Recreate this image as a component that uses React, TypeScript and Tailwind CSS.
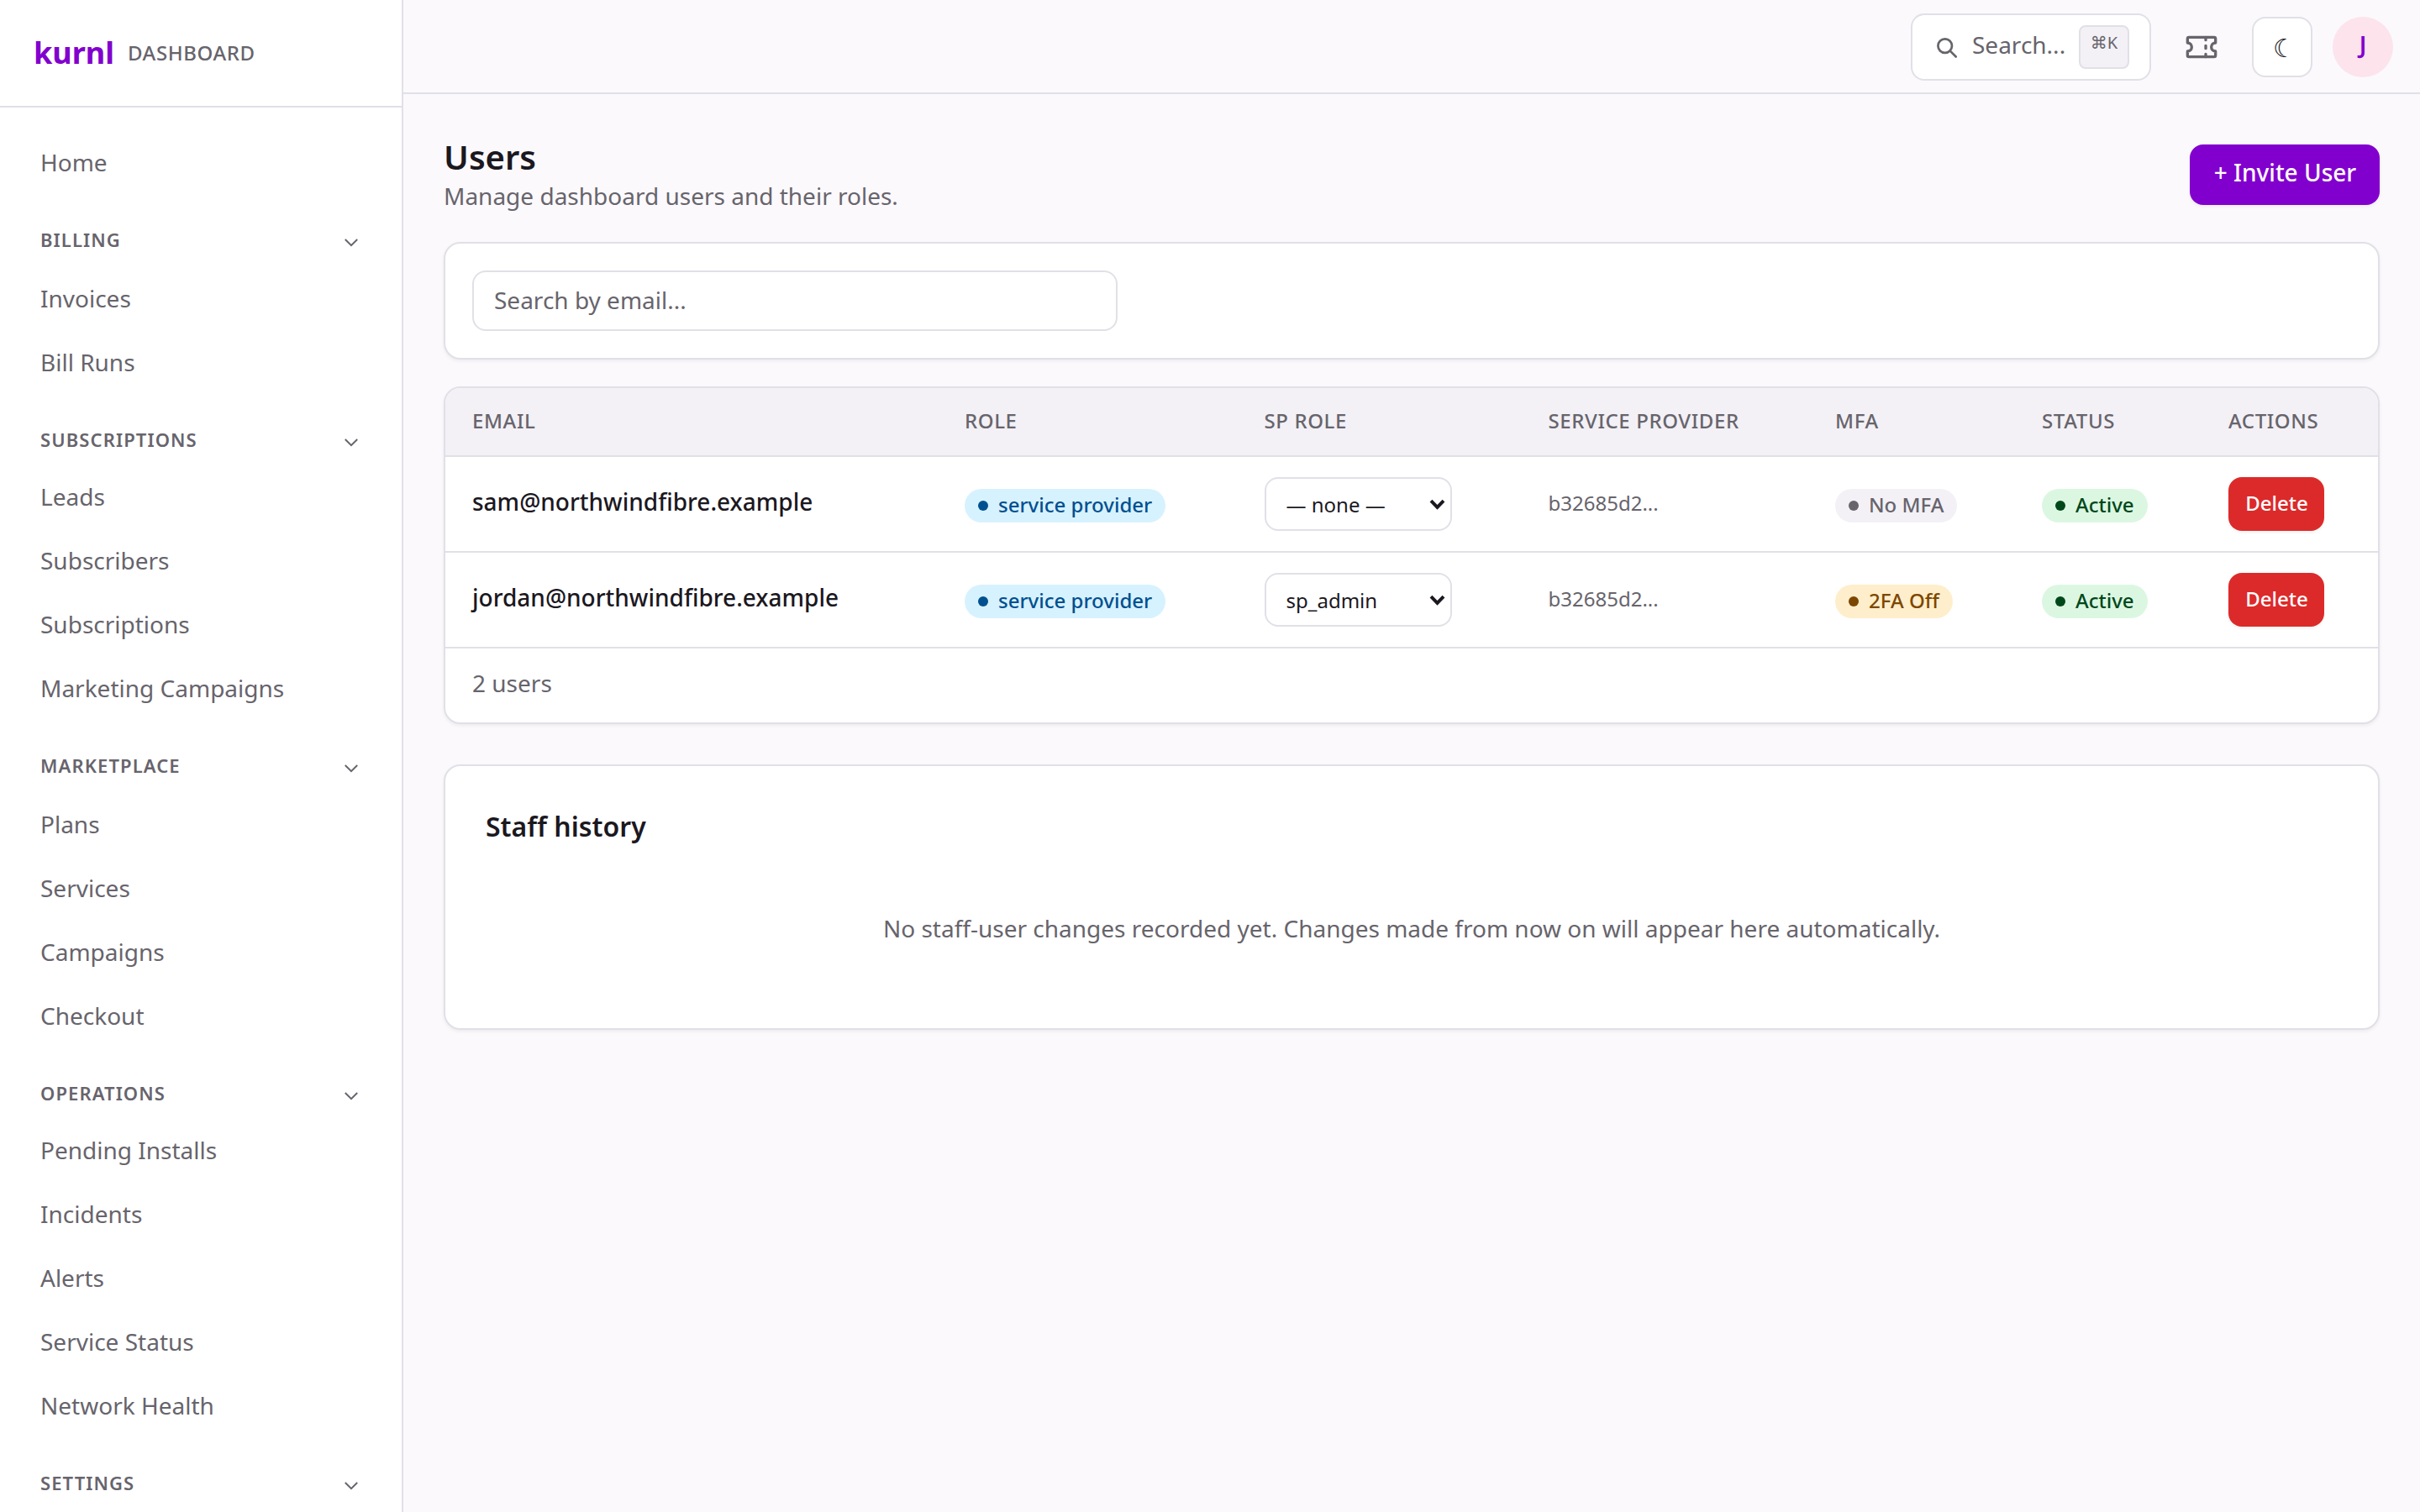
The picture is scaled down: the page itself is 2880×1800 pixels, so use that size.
import { useState } from "react";

interface NavSection {
  title: string;
  items: string[];
}

interface User {
  id: number;
  email: string;
  role: string;
  spRole: string;
  provider: string;
  mfa: boolean;
}

const sections: NavSection[] = [
  { title: "Billing", items: ["Invoices", "Bill Runs"] },
  {
    title: "Subscriptions",
    items: ["Leads", "Subscribers", "Subscriptions", "Marketing Campaigns"],
  },
  {
    title: "Marketplace",
    items: ["Plans", "Services", "Campaigns", "Checkout"],
  },
  {
    title: "Operations",
    items: [
      "Pending Installs",
      "Incidents",
      "Alerts",
      "Service Status",
      "Network Health",
    ],
  },
  { title: "Settings", items: [] },
];

const users: User[] = [
  {
    id: 1,
    email: "sam@northwindfibre.example",
    role: "service provider",
    spRole: "",
    provider: "b32685d2...",
    mfa: false,
  },
  {
    id: 2,
    email: "jordan@northwindfibre.example",
    role: "service provider",
    spRole: "sp_admin",
    provider: "b32685d2...",
    mfa: true,
  },
];

const badgeTones = {
  info: "bg-[#d7f2ff] text-[#00508f]",
  neutral: "bg-[#f3f1f6] text-[#67646c]",
  warning: "bg-[#ffeecb] text-[#7c4700]",
  success: "bg-[#dcf7e1] text-[#00481b]",
};

const Badge = ({
  tone,
  label,
}: {
  tone: keyof typeof badgeTones;
  label: string;
}) => (
  <span
    className={`mt-1 inline-flex h-10 items-center gap-3 rounded-[20px] px-4 align-top text-[24px] leading-[38px] font-medium whitespace-nowrap ${badgeTones[tone]}`}
  >
    <span className="h-3 w-3 rounded-full bg-current" />
    <span className="-mt-[3px]">{label}</span>
  </span>
);

const SpRoleSelect = ({ initial }: { initial: string }) => {
  const [value, setValue] = useState(initial);

  return (
    <div className="relative h-16 w-[223px]">
      <select
        value={value}
        onChange={(e) => setValue(e.target.value)}
        className="h-16 w-full appearance-none rounded-[16px] border-2 border-[#e1e0e7] bg-white pt-px pl-6 text-[24px] text-[#1b181f]"
      >
        <option value="">— none —</option>
        <option value="sp_admin">sp_admin</option>
      </select>
      <svg
        className="pointer-events-none absolute top-[26px] right-[8px] h-[13px] w-[19px]"
        viewBox="0 0 19 13"
        fill="none"
        stroke="#1b181f"
        strokeWidth="4"
      >
        <path d="M2 2.2 9.5 9.8 17 2.2" />
      </svg>
    </div>
  );
};

const Sidebar = () => (
  <aside className="flex h-full w-[480px] shrink-0 flex-col border-r-2 border-[#e1e0e7] bg-white">
    <div className="flex h-32 shrink-0 items-center gap-4 border-b-2 border-[#e1e0e7] pl-10">
      <span className="text-[36px] leading-[50px] font-bold text-[#8200ce]">
        kurnl
      </span>
      <span className="text-[24px] font-medium tracking-[0.025em] text-[#67646c] uppercase">
        Dashboard
      </span>
    </div>
    <nav className="pt-[27px] pr-[52px] pl-12 text-[#67646c]">
      <a className="flex h-[76px] items-center text-[28px]">Home</a>
      <div>
        {sections.map((section) => (
          <div key={section.title} className="group pt-9">
            <button className="flex h-[37px] w-full items-center justify-between text-[22px] font-semibold tracking-[0.05em] uppercase group-odd:mb-[13px] group-even:mb-[11px]">
              {section.title}
              <svg
                className="mt-[6px] h-[10px] w-4"
                viewBox="0 0 16 10"
                fill="none"
                stroke="currentColor"
                strokeWidth="2"
              >
                <path d="M.8 1 8 8.2 15.2 1" />
              </svg>
            </button>
            {section.items.map((item) => (
              <a key={item} className="flex h-[76px] items-center text-[28px]">
                {item}
              </a>
            ))}
          </div>
        ))}
      </div>
    </nav>
  </aside>
);

const Topbar = () => (
  <header className="flex h-28 shrink-0 items-center justify-end gap-6 border-b-2 border-[#e1e0e7] pt-[2px] pr-8">
    <button className="flex h-20 w-[286px] items-center rounded-[16px] border-2 border-[#e1e0e7] bg-white px-6 text-[#67646c]">
      <svg
        className="mt-[2px] mr-[15px] h-8 w-8"
        viewBox="0 0 32 32"
        fill="none"
        stroke="currentColor"
        strokeWidth="2.7"
        strokeLinecap="round"
      >
        <circle cx="14.7" cy="13.6" r="8.3" />
        <path d="m20.8 19.6 6.9 6.9" />
      </svg>
      <span className="-mt-[6px] flex-1 text-left text-[28px]">Search...</span>
      <kbd className="h-[52px] w-[60px] rounded-lg border-2 border-[#e1e0e7] bg-[#f3f1f6] text-center font-['Noto_Sans','DejaVu_Sans',sans-serif] text-[20px] leading-[38px]">
        ⌘K
      </kbd>
    </button>
    <button className="flex h-[72px] w-[72px] items-center justify-center text-[#67646c]">
      <svg
        className="h-10 w-10"
        viewBox="0 0 24 24"
        fill="none"
        stroke="currentColor"
        strokeWidth="2"
        strokeLinecap="round"
        strokeLinejoin="round"
      >
        <path d="M2 9a3 3 0 0 1 0 6v3a1 1 0 0 0 1 1h18a1 1 0 0 0 1-1v-3a3 3 0 0 1 0-6V6a1 1 0 0 0-1-1H3a1 1 0 0 0-1 1Z" />
        <path d="M15 5v2M15 11v2M15 17v2" />
      </svg>
    </button>
    <button className="flex h-[72px] w-[72px] items-center justify-center rounded-[16px] border-2 border-[#e1e0e7] bg-white pl-[5px] text-[30px] text-[#1b181f]">
      ☾
    </button>
    <div className="flex h-[72px] w-[72px] items-center justify-center rounded-full bg-[#fce3ec] pb-[6px] text-[28px] font-semibold text-[#8200ce]">
      J
    </div>
  </header>
);

const UsersTable = () => (
  <div className="mt-8 overflow-hidden rounded-[20px] border-2 border-[#e1e0e7] bg-white shadow-[0_2px_4px_rgba(27,24,31,0.06)]">
    <table className="w-full table-fixed border-separate border-spacing-0 text-left">
      <colgroup>
        <col className="w-[586px]" />
        <col className="w-[356.5px]" />
        <col className="w-[338px]" />
        <col className="w-[341.5px]" />
        <col className="w-[246px]" />
        <col className="w-[222px]" />
        <col />
      </colgroup>
      <thead>
        <tr className="bg-[#f3f1f6] text-[24px] tracking-[0.025em] text-[#67646c] uppercase">
          {[
            "Email",
            "Role",
            "SP Role",
            "Service Provider",
            "MFA",
            "Status",
            "Actions",
          ].map((label) => (
            <th
              key={label}
              className="h-[82px] border-b-2 border-[#e1e0e7] px-8 pb-[3px] font-medium whitespace-nowrap"
            >
              {label}
            </th>
          ))}
        </tr>
      </thead>
      <tbody>
        {users.map((user) => (
          <tr
            key={user.id}
            className="[&>td]:h-[114px] [&>td]:border-b-2 [&>td]:border-[#e1e0e7]"
          >
            <td className="px-8 pb-[6px] text-[28px] font-medium text-[#1b181f]">
              {user.email}
            </td>
            <td className="px-8">
              <Badge tone="info" label={user.role} />
            </td>
            <td className="px-8">
              <SpRoleSelect initial={user.spRole} />
            </td>
            <td className="px-8 pb-[3px] text-[24px] text-[#67646c]">
              {user.provider}
            </td>
            <td className="px-8">
              <Badge
                tone={user.mfa ? "warning" : "neutral"}
                label={user.mfa ? "2FA Off" : "No MFA"}
              />
            </td>
            <td className="px-8">
              <Badge tone="success" label="Active" />
            </td>
            <td className="px-8">
              <button className="block h-16 w-[114px] rounded-[16px] bg-[#dc2a2a] pb-[3px] pl-px text-[24px] font-medium text-white shadow-[0_2px_4px_rgba(27,24,31,0.06)]">
                Delete
              </button>
            </td>
          </tr>
        ))}
      </tbody>
    </table>
    <div className="flex h-[88px] items-center pb-[6px] pl-8 text-[28px] text-[#67646c]">
      {users.length} users
    </div>
  </div>
);

const App = () => {
  return (
    <div className="flex h-[1800px] w-[2880px] overflow-hidden bg-[#fbf9fc] font-['Noto_Sans',sans-serif]">
      <Sidebar />
      <div className="flex min-w-0 flex-1 flex-col">
        <Topbar />
        <main className="p-12">
          <div className="mb-8 flex h-24 items-center justify-between">
            <div className="h-24">
              <h1 className="text-[40px] leading-[54px] font-semibold text-[#1b181f]">
                Users
              </h1>
              <p className="-mt-[2px] text-[28px] leading-[42px] text-[#67646c]">
                Manage dashboard users and their roles.
              </p>
            </div>
            <button className="h-[72px] w-[226px] rounded-[16px] bg-[#8200ce] pb-[6px] pl-px text-[28px] font-medium whitespace-nowrap text-white shadow-[0_2px_4px_rgba(27,24,31,0.06)]">
              + Invite User
            </button>
          </div>

          <div className="rounded-[20px] border-2 border-[#e1e0e7] bg-white p-8 shadow-[0_2px_4px_rgba(27,24,31,0.06)]">
            <input
              placeholder="Search by email..."
              className="block h-[72px] w-[768px] rounded-[16px] border-2 border-[#e1e0e7] bg-white px-6 pb-[2px] text-[28px] text-[#1b181f] placeholder:text-[#67646c]"
            />
          </div>

          <UsersTable />

          <section className="mt-12 h-[316px] rounded-[20px] border-2 border-[#e1e0e7] bg-white p-12 shadow-[0_2px_4px_rgba(27,24,31,0.06)]">
            <h2 className="text-[32px] leading-[48px] font-semibold text-[#1b181f]">
              Staff history
            </h2>
            <p className="mt-[26px] py-12 text-center text-[28px] leading-[46px] text-[#67646c]">
              No staff-user changes recorded yet. Changes made from now on will
              appear here automatically.
            </p>
          </section>
        </main>
      </div>
    </div>
  );
};

export default App;
